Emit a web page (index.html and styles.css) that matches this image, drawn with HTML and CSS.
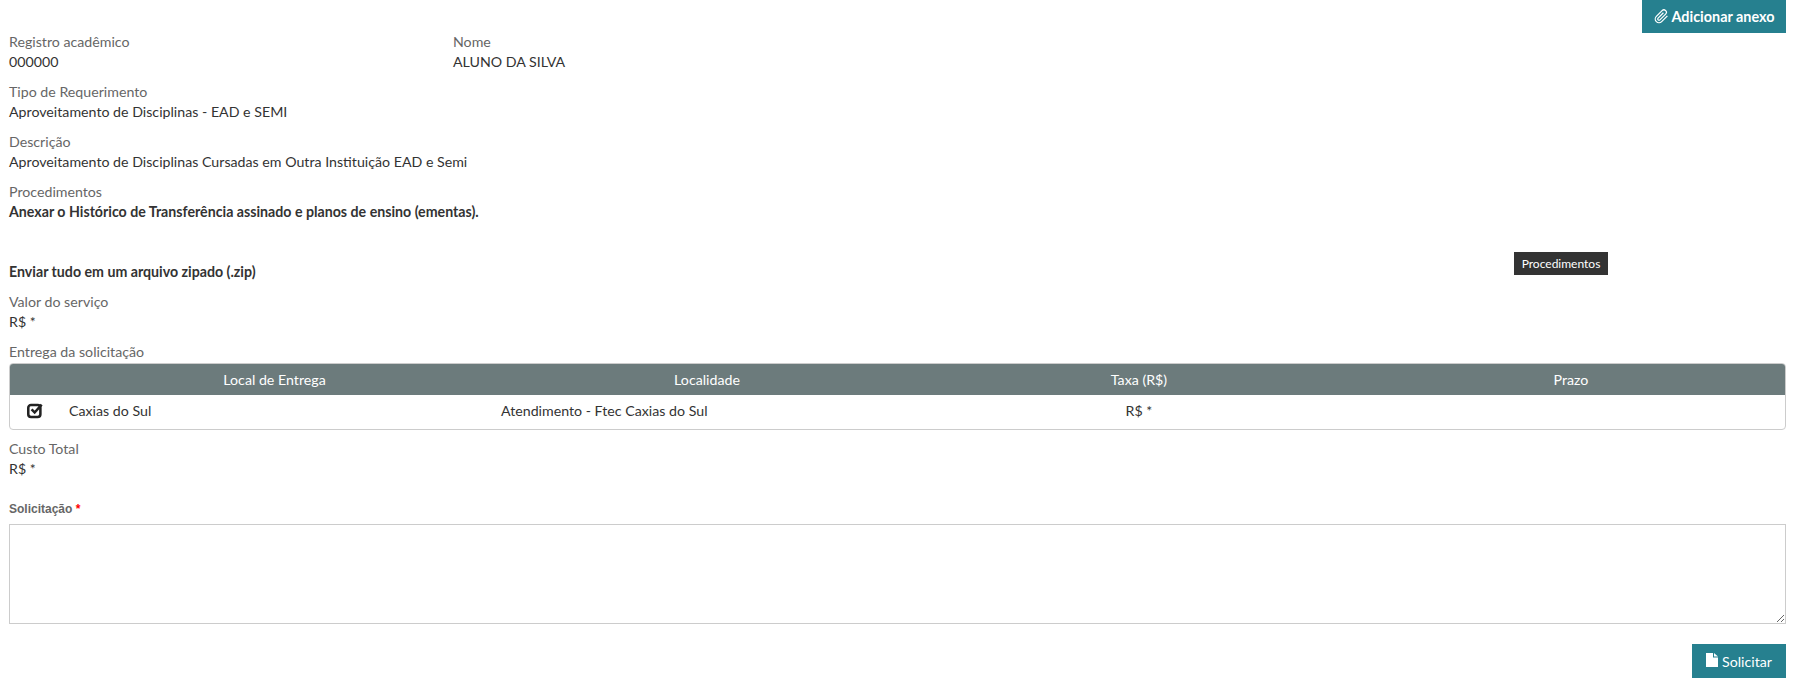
FILE: index.html
```html
<!DOCTYPE html>
<html lang="pt-BR">
<head>
  <meta charset="UTF-8">
  <title>Requerimento</title>
  <link rel="stylesheet" href="styles.css">
</head>
<body>
  <div class="page">
    <div class="top-bar">
      <button class="btn btn-attach">
        <svg class="icon-clip" viewBox="0 0 24 24"><path d="M21.44 11.05l-9.19 9.19a6 6 0 0 1-8.49-8.49l9.19-9.19a4 4 0 0 1 5.66 5.66l-9.2 9.19a2 2 0 0 1-2.83-2.83l8.49-8.48"/></svg>
        Adicionar anexo
      </button>
    </div>

    <div class="field-row">
      <div class="field field-ra">
        <div class="label">Registro acadêmico</div>
        <div class="value">000000</div>
      </div>
      <div class="field">
        <div class="label">Nome</div>
        <div class="value">ALUNO DA SILVA</div>
      </div>
    </div>

    <div class="field">
      <div class="label">Tipo de Requerimento</div>
      <div class="value">Aproveitamento de Disciplinas - EAD e SEMI</div>
    </div>

    <div class="field">
      <div class="label">Descrição</div>
      <div class="value">Aproveitamento de Disciplinas Cursadas em Outra Instituição EAD e Semi</div>
    </div>

    <div class="field">
      <div class="label">Procedimentos</div>
      <div class="value strong">Anexar o Histórico de Transferência assinado e planos de ensino (ementas).</div>
      <div class="value strong zip">Enviar tudo em um arquivo zipado (.zip)</div>
    </div>

    <div class="field">
      <div class="label">Valor do serviço</div>
      <div class="value">R$ *</div>
    </div>

    <div class="field">
      <div class="label">Entrega da solicitação</div>
      <div class="table-box">
        <table class="delivery">
          <colgroup>
            <col class="col-check">
            <col class="col-local">
            <col class="col-place">
            <col class="col-fee">
            <col>
          </colgroup>
          <thead>
            <tr>
              <th></th>
              <th class="th-local">Local de Entrega</th>
              <th>Localidade</th>
              <th>Taxa (R$)</th>
              <th>Prazo</th>
            </tr>
          </thead>
          <tbody>
            <tr>
              <td class="td-check">
                <svg class="icon-check" viewBox="0 0 16 16"><rect x="1.2" y="2.8" width="11.4" height="11.4" rx="2.6"/><path d="M4.3 7l2.9 2.9 6.6-7.4"/></svg>
              </td>
              <td>Caxias do Sul</td>
              <td>Atendimento - Ftec Caxias do Sul</td>
              <td class="td-fee">R$ *</td>
              <td></td>
            </tr>
          </tbody>
        </table>
      </div>
    </div>

    <div class="field">
      <div class="label">Custo Total</div>
      <div class="value">R$ *</div>
    </div>

    <form class="request">
      <label class="request-label" for="solicitacao">Solicitação <span class="req">*</span></label>
      <textarea id="solicitacao" class="request-text"></textarea>
      <div class="actions">
        <button type="button" class="btn btn-send">
          <svg class="icon-file" viewBox="0 0 12 14"><path d="M0 0h7v4.5h5V14H0z"/><path d="M8 0l4 3.6H8z"/></svg>
          Solicitar
        </button>
      </div>
    </form>
  </div>

  <div class="tooltip">Procedimentos</div>
</body>
</html>
```

FILE: styles.css
```css
body, html {
  margin: 0;
  padding: 0;
  background-color: white;
  font-family: 'Lato', sans-serif;
  font-size: 14.2px;
  line-height: 20px;
  color: #333;
}

.page {
  padding: 0 14px 0 9px;
}

.top-bar {
  display: flex;
  justify-content: flex-end;
  height: 32px;
}

.btn {
  display: flex;
  align-items: center;
  justify-content: center;
  gap: 4px;
  border: none;
  background-color: #26808f;
  color: white;
  font-family: 'Lato', sans-serif;
  font-size: 14.2px;
  padding: 0;
}

.btn-attach {
  width: 144px;
  height: 33px;
  gap: 3px;
  font-weight: bold;
  font-size: 14.4px;
}

.btn-send {
  width: 94px;
  height: 34px;
}

.icon-clip {
  width: 15px;
  height: 15px;
  fill: none;
  stroke: white;
  stroke-width: 2;
}

.icon-file {
  width: 12px;
  height: 14px;
  fill: white;
  margin-top: -2px;
}

.field-row {
  display: flex;
}

.field-ra {
  width: 444px;
}

.field {
  margin-bottom: 10px;
}

.label {
  color: #666;
}

.strong {
  font-weight: bold;
}

.zip {
  margin-top: 40px;
}

.table-box {
  border: 1px solid #ccc;
  border-radius: 4px;
  overflow: hidden;
  margin: 1px 0 -1px;
}

.delivery {
  width: 100%;
  border-collapse: collapse;
  table-layout: fixed;
}

.col-check {
  width: 51px;
}

.col-local {
  width: 432px;
}

.col-place {
  width: 428px;
}

.col-fee {
  width: 436px;
}

.delivery th {
  background-color: #6c7b7c;
  color: white;
  font-weight: normal;
  height: 31px;
  padding: 0 8px;
  text-align: center;
}

.delivery th.th-local {
  padding-right: 13px;
}

.delivery td {
  height: 32px;
  padding: 0 8px 2px;
}

.td-check {
  text-align: center;
}

.td-fee {
  text-align: center;
}

.icon-check {
  display: block;
  width: 17px;
  height: 17px;
  margin: -2px 0 0 9px;
  fill: none;
  stroke: #222;
  stroke-width: 2.4;
}

.request {
  margin-top: 20px;
}

.request-label {
  display: block;
  font-family: 'Liberation Sans', sans-serif;
  font-size: 12px;
  font-weight: bold;
  line-height: 20px;
  color: #666;
}

.req {
  color: red;
}

.request-text {
  display: block;
  box-sizing: border-box;
  width: 100%;
  height: 100px;
  margin: 5px 0 0;
  border: 1px solid #ccc;
  padding: 6px;
  background: white;
}

.actions {
  display: flex;
  justify-content: flex-end;
  margin-top: 20px;
}

.tooltip {
  position: absolute;
  left: 1514px;
  top: 252px;
  width: 94px;
  height: 23px;
  box-sizing: border-box;
  background-color: #333;
  color: white;
  font-size: 12px;
  line-height: 23px;
  text-align: center;
}
```
